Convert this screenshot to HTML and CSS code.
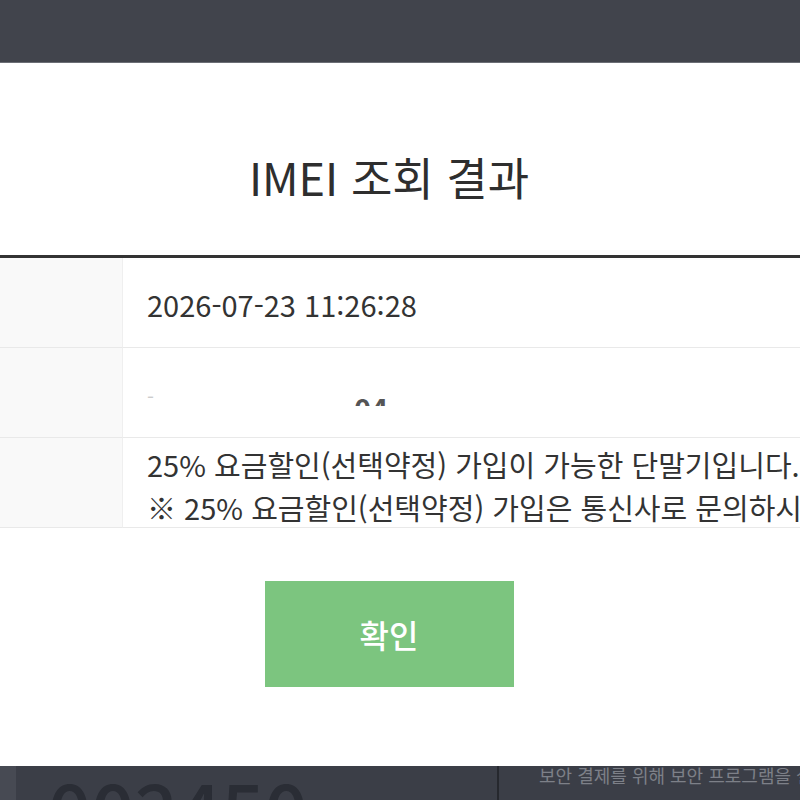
FILE: index.html
```html
<!DOCTYPE html>
<html lang="ko">
<head>
  <meta charset="UTF-8" />
  <meta name="viewport" content="width=device-width, initial-scale=1" />
  <title>IMEI 조회 결과</title>
  <link rel="stylesheet" href="styles.css">
</head>
<body>
  <!-- Dimmed page header behind the popup -->
  <div class="topbar"></div>

  <!-- Result popup -->
  <div class="modal">
    <h2 class="modal-title">IMEI 조회 결과</h2>

    <div class="result">
      <div class="result-label"></div>
      <div class="result-value">2026-07-23 11:26:28</div>

      <div class="result-label"></div>
      <div class="result-value masked">
        <span class="masked-dash">-</span>
        <span class="masked-tail">04</span>
      </div>

      <div class="result-label"></div>
      <div class="result-value multi">
        <span>25% 요금할인(선택약정) 가입이 가능한 단말기입니다.</span>
        <span>※ 25% 요금할인(선택약정) 가입은 통신사로 문의하시기 바랍니다.</span>
      </div>
    </div>

    <div class="modal-actions">
      <button type="button" class="btn-ok">확인</button>
    </div>
  </div>

  <!-- Dimmed page content behind the popup -->
  <div class="under">
    <div class="under-edge"></div>
    <div class="under-number">002450</div>
    <div class="under-note">보안 결제를 위해 보안 프로그램을 설치해 주세요</div>
  </div>
</body>
</html>
```

FILE: styles.css
```css
:root {
  --dim-color: #41444c;
  --text-color: #333;
  --line-color: #e9e9e9;
  --ok-color: #7cc57f;
}

html, body {
  margin: 0;
  height: 100%;
  overflow: hidden;
}

body {
  font-family: "Noto Sans CJK KR", "Noto Sans", sans-serif;
  color: var(--text-color);
  background: #fff;
}

/* Top dimmed bar */
.topbar {
  height: 62px;
  background: var(--dim-color);
  border-bottom: 1px solid #6b6e75;
}

.modal {
  padding: 84px 0 79px;
  background: #fff;
}

.modal-title {
  margin: 0 0 48px;
  padding-right: 22px;
  font-size: 45px;
  font-weight: 400;
  line-height: 60px;
  text-align: center;
  color: #2e2e2e;
}

/* Result table */
.result {
  display: grid;
  grid-template-columns: 123px 1fr;
  border-top: 3px solid #333;
}

.result-label,
.result-value {
  box-sizing: border-box;
  height: 90px;
  border-bottom: 1px solid var(--line-color);
}

.result-label {
  background: #f9f9f9;
  border-right: 1px solid #efefef;
}

.result-value {
  display: flex;
  align-items: center;
  padding: 4px 0 0 24px;
  font-size: 29px;
  line-height: 43px;
  white-space: nowrap;
  overflow: hidden;
}

.result-value.multi {
  flex-direction: column;
  align-items: flex-start;
  justify-content: flex-start;
  padding-top: 5px;
}

/* Blurred IMEI value */
.result-value.masked {
  align-items: flex-start;
  padding-top: 0;
}

.masked-dash,
.masked-tail {
  display: block;
  height: 14px;
  margin-top: 44px;
  overflow: hidden;
}

.masked-dash {
  color: #ccc;
  font-size: 20px;
  line-height: 10px;
}

.masked-tail {
  margin-left: 200px;
  color: #555;
  font-weight: 700;
  line-height: 32px;
}

.modal-actions {
  display: flex;
  justify-content: center;
  margin-top: 53px;
  padding-right: 22px;
}

.btn-ok {
  width: 249px;
  height: 106px;
  border: 0;
  background: var(--ok-color);
  color: #fff;
  font-family: inherit;
  font-size: 32px;
  font-weight: 500;
  cursor: pointer;
}

/* Page behind the popup */
.under {
  display: flex;
  height: 40px;
  overflow: hidden;
  background: #3b3e47;
}

.under-edge {
  width: 16px;
  background: #474a53;
}

.under-number {
  width: 449px;
  padding: 4px 0 0 32px;
  font-size: 76px;
  font-weight: 500;
  line-height: 1;
  color: #2a2d35;
}

.under-note {
  flex: 1;
  padding-left: 40px;
  border-left: 2px solid #26282e;
  font-size: 18px;
  line-height: 18px;
  color: #7d8088;
  white-space: nowrap;
  overflow: hidden;
}
```
